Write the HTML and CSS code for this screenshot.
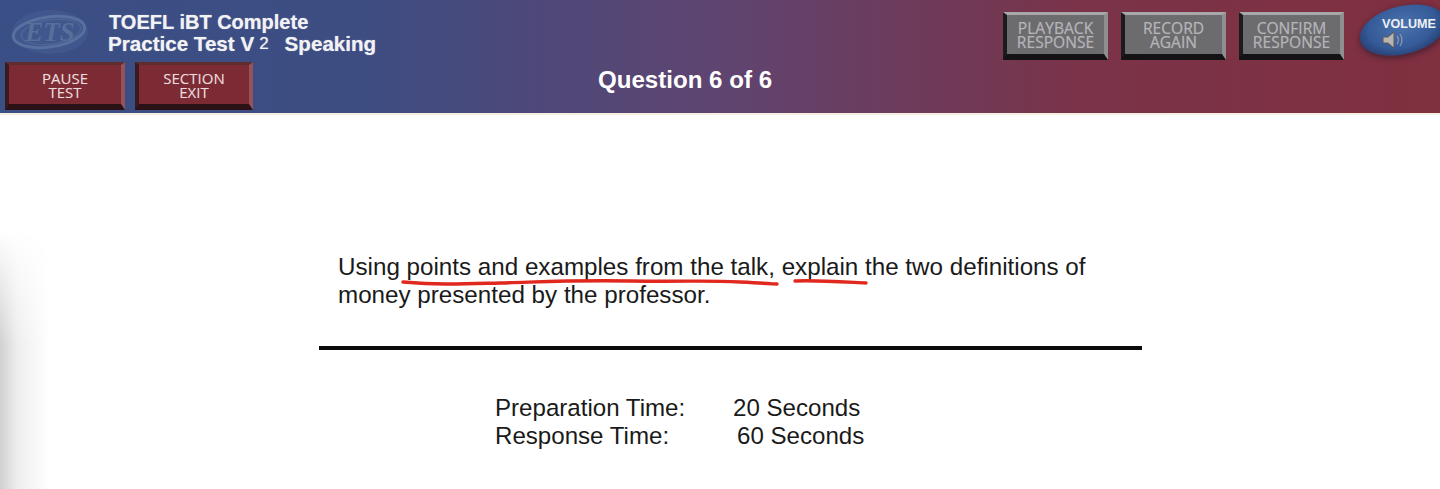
FILE: index.html
```html
<!DOCTYPE html>
<html lang="en">
<head>
    <meta charset="UTF-8">
    <title>TOEFL iBT Complete Practice Test V2 Speaking</title>
    <link rel="stylesheet" href="styles.css">
</head>
<body>
    <div class="topbar">
        <div class="left-col">
            <div class="brand">
                <svg class="ets-logo" width="80" height="48" viewBox="0 0 80 48">
                    <ellipse cx="40" cy="24" rx="38" ry="22" fill="#4a6296" opacity="0.45"/>
                    <ellipse cx="39" cy="24" rx="36" ry="15" fill="none" stroke="#56709f" stroke-width="3" transform="rotate(-8 39 24)"/>
                    <ellipse cx="41" cy="24" rx="30" ry="12" fill="none" stroke="#4d6594" stroke-width="1.5" transform="rotate(-8 41 24)"/>
                    <text x="40" y="33" text-anchor="middle" class="ets-text">ETS</text>
                </svg>
                <div class="brand-text">
                    <div>TOEFL iBT Complete</div>
                    <div class="brand-second">Practice Test V<span class="version">2</span><span class="section-name">Speaking</span></div>
                </div>
            </div>
            <div class="test-buttons">
                <div class="bevel-btn red pause">PAUSE<br>TEST</div>
                <div class="bevel-btn red exit">SECTION<br>EXIT</div>
            </div>
        </div>
        <div class="question-count">Question 6 of 6</div>
        <div class="right-col">
            <div class="bevel-btn grey">PLAYBACK<br>RESPONSE</div>
            <div class="bevel-btn grey">RECORD<br>AGAIN</div>
            <div class="bevel-btn grey">CONFIRM<br>RESPONSE</div>
            <div class="volume">
                <span class="volume-label">VOLUME</span>
                <svg class="speaker" width="24" height="18" viewBox="0 0 24 18">
                    <path d="M1 6h5l6-5v16l-6-5H1z" fill="#b9b4b0" stroke="#5c5a60" stroke-width="1"/>
                    <path d="M15 5q3 4 0 8M18 3q4 6 0 12" fill="none" stroke="#8d93ad" stroke-width="1.3"/>
                </svg>
            </div>
        </div>
    </div>

    <div class="side-shadow"></div>

    <div class="content">
        <div class="prompt">
            <p>Using points and examples from the talk, explain the two definitions of<br>money presented by the professor.</p>
            <svg class="ink" width="480" height="12" viewBox="0 0 480 12">
                <path d="M3 5C40 8 60 7 100 6S170 3 230 4S300 3 340 5S370 7 377 7" fill="none" stroke="#e0281f" stroke-width="3.4" stroke-linecap="round"/>
                <path d="M395 4C415 3 445 5 466 6" fill="none" stroke="#e0281f" stroke-width="3.4" stroke-linecap="round"/>
            </svg>
        </div>
        <div class="rule"></div>
        <div class="timing">
            <div>Preparation Time:</div><div>20 Seconds</div>
            <div>Response Time:</div><div class="response-value">60 Seconds</div>
        </div>
    </div>
</body>
</html>
```

FILE: styles.css
```css
html, body {
    margin: 0;
    padding: 0;
    height: 489px;
    overflow: hidden;
}
body {
    font-family: "Liberation Sans", Arial, sans-serif;
    background-color: #fff;
    color: #1a1a1a;
    position: relative;
}
.topbar {
    height: 113px;
    display: flex;
    background: linear-gradient(90deg, #3a4f86 0%, #3d4d82 25%, #5f4470 50%, #7a3349 75%, #80303f 100%);
    border-bottom: 2px solid #f6efe2;
}
.left-col {
    width: 400px;
    flex: none;
    padding: 8px 0 0 5px;
    box-sizing: border-box;
}
.brand {
    display: flex;
    align-items: flex-start;
    height: 54px;
}
.ets-logo {
    margin-left: 5px;
    flex: none;
    filter: blur(0.6px);
}
.ets-text {
    font-family: "Liberation Serif", serif;
    font-style: italic;
    font-weight: bold;
    font-size: 27px;
    fill: #567099;
}
.brand-text {
    margin: 3px 0 0 19px;
    color: #f2f2f4;
    font-weight: bold;
    font-size: 20px;
    line-height: 22px;
    white-space: nowrap;
    text-shadow: 0 0 1px rgba(255, 255, 255, 0.6);
}
.brand-second {
    font-size: 20.6px;
    margin-left: -1px;
}
.version {
    font-size: 17px;
    font-weight: normal;
    position: relative;
    top: -2px;
    margin-left: 5px;
}
.section-name {
    margin-left: 16px;
}
.test-buttons {
    display: flex;
    gap: 10px;
}
.bevel-btn {
    box-sizing: border-box;
    flex: none;
    height: 48px;
    display: flex;
    align-items: center;
    justify-content: center;
    text-align: center;
    font-family: "Open Sans", sans-serif;
    font-size: 15px;
    line-height: 14px;
    border-style: solid;
    border-width: 3px 4px 6px 4px;
    padding-top: 1px;
    text-shadow: 0 0 1px rgba(255, 255, 255, 0.25);
}
.red {
    background-color: #7c2a34;
    color: #e9dcdc;
    border-color: #5f2c30 #94525a #2a1216 #3a1a1d;
}
.pause {
    width: 120px;
}
.exit {
    width: 118px;
}
.question-count {
    flex: none;
    width: 570px;
    padding: 67px 0 0 198px;
    box-sizing: border-box;
    color: #fff;
    font-weight: bold;
    font-size: 24.1px;
    line-height: 26px;
    white-space: nowrap;
    margin-right: 33px;
}
.right-col {
    display: flex;
    align-items: flex-start;
    padding-top: 12px;
    gap: 13px;
}
.grey {
    width: 105px;
    background-color: #6c6b6e;
    color: #b4b4b8;
    font-size: 15.6px;
    border-color: #a8a7aa #8f8e91 #141214 #1c1a1c;
}
.volume {
    position: relative;
    width: 88px;
    height: 54px;
    margin: -8px 0 0 2px;
    padding: 12px 0 0 23px;
    box-sizing: border-box;
    color: #eef0f4;
    font-weight: bold;
    font-size: 12.6px;
    line-height: 16px;
    flex: none;
}
.volume::before {
    content: "";
    position: absolute;
    left: 0;
    top: 2px;
    width: 88px;
    height: 48px;
    border-radius: 50%;
    background: radial-gradient(ellipse at 50% 40%, #4d74ae 0%, #345a98 55%, #16234a 100%);
    box-shadow: 0 2px 6px rgba(20, 20, 40, 0.6);
    transform: rotate(-14deg);
}
.volume-label, .speaker {
    position: relative;
    display: block;
}
.speaker {
    margin-top: -1px;
}
.side-shadow {
    position: absolute;
    left: 0;
    top: 230px;
    width: 50px;
    height: 259px;
    background: linear-gradient(90deg, #d0d0d0 0%, #eeeeee 35%, #ffffff 100%);
    -webkit-mask-image: linear-gradient(180deg, transparent 0%, #000 45%);
}
.content {
    position: relative;
    padding-top: 138px;
}
.prompt {
    position: relative;
    margin-left: 338px;
    width: 800px;
}
.prompt p {
    margin: 0;
    font-size: 24.2px;
    line-height: 28px;
    white-space: nowrap;
}
.ink {
    position: absolute;
    left: 62px;
    top: 24px;
}
.rule {
    width: 823px;
    height: 4px;
    margin: 37px 0 0 319px;
    background-color: #0a0a0a;
}
.timing {
    display: grid;
    grid-template-columns: 238px auto;
    margin: 44px 0 0 495px;
    font-size: 24.1px;
    line-height: 28px;
}
.response-value {
    margin-left: 4px;
}
```
